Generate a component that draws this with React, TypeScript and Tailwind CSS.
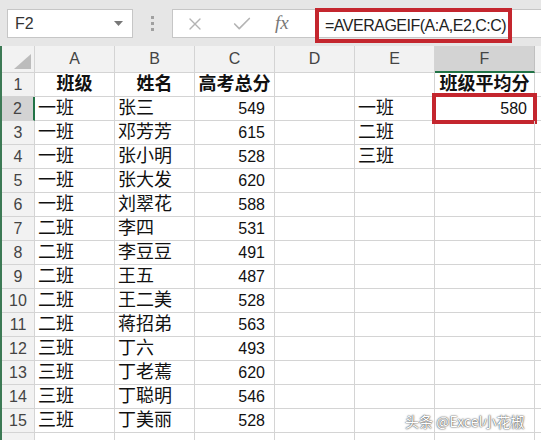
import { X, Check } from "lucide-react"

const font = "font-['Liberation_Sans','Noto_Sans_CJK_SC',sans-serif]"

const rows = [
  ["一班", "张三", "549", "一班", "580"],
  ["一班", "邓芳芳", "615", "二班", ""],
  ["一班", "张小明", "528", "三班", ""],
  ["一班", "张大发", "620", "", ""],
  ["一班", "刘翠花", "588", "", ""],
  ["二班", "李四", "531", "", ""],
  ["二班", "李豆豆", "491", "", ""],
  ["二班", "王五", "487", "", ""],
  ["二班", "王二美", "528", "", ""],
  ["二班", "蒋招弟", "563", "", ""],
  ["三班", "丁六", "493", "", ""],
  ["三班", "丁老蔫", "620", "", ""],
  ["三班", "丁聪明", "546", "", ""],
  ["三班", "丁美丽", "528", "", ""],
]

const cols = ["A", "B", "C", "D", "E", "F"]
const widths = ["w-[80px]", "w-[80px]", "w-[80px]", "w-[80px]", "w-[80px]", "w-[100px]"]

function Cell({ w, className = "", children }: { w: string; className?: string; children?: React.ReactNode }) {
  return (
    <div className={`${w} shrink-0 h-full border-r border-b border-[#d4d4d4] flex items-center leading-[23px] ${className}`}>
      {children}
    </div>
  )
}

export default function App() {
  return (
    <div className={`w-[541px] h-[440px] overflow-hidden bg-white relative ${font}`}>
      {/* toolbar */}
      <div className="h-[46px] bg-[#e6e6e6] flex items-start pt-[9px] pl-[7px]">
        <div className="w-[126px] h-[29px] bg-white border border-[#c6c6c6] flex items-center pl-[7px] pr-[9px] text-[16px] text-[#333]">
          <span className="flex-1">F2</span>
          <svg width="9" height="5" viewBox="0 0 9 5"><polygon points="0,0 9,0 4.5,5" fill="#777" /></svg>
        </div>
        <div className="w-[39px] h-[29px] flex flex-col items-center justify-center gap-[3px]">
          <span className="w-[3px] h-[3px] bg-[#a0a0a0]" />
          <span className="w-[3px] h-[3px] bg-[#a0a0a0]" />
          <span className="w-[3px] h-[3px] bg-[#a0a0a0]" />
        </div>
        <div className="w-[137px] h-[29px] bg-white border border-[#c6c6c6] border-r-0 flex items-center">
          <X className="ml-[12px] w-[20px] h-[20px] text-[#b4b4b4]" strokeWidth={1.6} />
          <Check className="ml-[26px] w-[22px] h-[22px] text-[#b4b4b4]" strokeWidth={1.8} />
          <span className="ml-[22px] font-['Liberation_Serif',serif] italic text-[19px] text-[#777]">fx</span>
        </div>
        <div className="flex-1 h-[29px] bg-white border-y border-[#c6c6c6] relative">
          <div className="absolute left-[6px] -top-[2px] w-[197px] h-[35px] border-4 border-[#c4262e] flex items-center pl-[6px] text-[16px] tracking-[-0.5px] text-[#222]">
            =AVERAGEIF(A:A,E2,C:C)
          </div>
        </div>
      </div>

      <div className="border-l-2 border-[#3d7a55]">
        {/* column header */}
        <div className="h-[27px] flex bg-[#f2f2f2] text-[16px] text-[#444]">
          <div className="w-[33px] shrink-0 h-full border-r border-b border-[#d4d4d4] flex items-end justify-end pr-[3px] pb-[3px]">
            <svg width="17" height="15" viewBox="0 0 17 15"><polygon points="17,0 17,15 0,15" fill="#bcbcbc" /></svg>
          </div>
          {cols.map((c, i) => (
            <div
              key={c}
              className={`${widths[i]} shrink-0 h-full border-r flex items-center justify-center ${
                c === "F" ? "bg-[#d3d3d3] border-b-2 border-b-[#217346] border-r-[#c0c0c0]" : "border-b border-[#d4d4d4]"
              }`}
            >
              {c}
            </div>
          ))}
          <div className="flex-1 h-full border-b border-[#d4d4d4]" />
        </div>

        {/* row 1 */}
        <div className="h-[24px] flex text-[18px] text-[#111]">
          <div className="w-[33px] shrink-0 h-full bg-[#f2f2f2] border-r border-b border-[#d4d4d4] flex items-center justify-center text-[16px] text-[#444]">1</div>
          <Cell w={widths[0]} className="justify-center font-bold">班级</Cell>
          <Cell w={widths[1]} className="justify-center font-bold">姓名</Cell>
          <Cell w={widths[2]} className="justify-center font-bold">高考总分</Cell>
          <Cell w={widths[3]} />
          <Cell w={widths[4]} />
          <Cell w={widths[5]} className="justify-center font-bold">班级平均分</Cell>
          <div className="flex-1 h-full border-b border-[#d4d4d4]" />
        </div>

        {rows.map((r, i) => {
          const n = i + 2
          const sel = n === 2
          return (
            <div key={n} className="h-[24px] flex text-[18px] text-[#111]">
              <div
                className={`w-[33px] shrink-0 h-full border-b border-[#d4d4d4] flex items-center justify-center text-[16px] text-[#444] ${
                  sel ? "bg-[#d3d3d3] border-r-2 border-r-[#217346]" : "bg-[#f2f2f2] border-r"
                }`}
              >
                {n}
              </div>
              <Cell w={widths[0]} className="pl-[3px]">{r[0]}</Cell>
              <Cell w={widths[1]} className="pl-[3px]">{r[1]}</Cell>
              <Cell w={widths[2]} className="justify-end pr-[9px] text-[16px]">{r[2]}</Cell>
              <Cell w={widths[3]} />
              <Cell w={widths[4]} className="pl-[3px]">{r[3]}</Cell>
              <Cell w={widths[5]} className="justify-end pr-[7px] text-[16px] relative">
                {r[4]}
                {sel && <div className="absolute -left-[3px] -right-[3px] -top-[4px] -bottom-[4px] border-4 border-[#c4262e]" />}
              </Cell>
              <div className="flex-1 h-full border-b border-[#d4d4d4]" />
            </div>
          )
        })}
        <div className="h-[24px] flex">
          <div className="w-[33px] shrink-0 h-full bg-[#f2f2f2] border-r border-[#d4d4d4]" />
          {widths.map((w, i) => (
            <div key={i} className={`${w} shrink-0 h-full border-r border-[#d4d4d4]`} />
          ))}
        </div>
      </div>

      <div className="absolute left-[405px] top-[411px] text-[14px] text-white [text-shadow:0_0_2px_#444,0_0_1px_#444] font-['Noto_Sans_CJK_SC',sans-serif]">
        头条 @Excel小花椒
      </div>
    </div>
  )
}
